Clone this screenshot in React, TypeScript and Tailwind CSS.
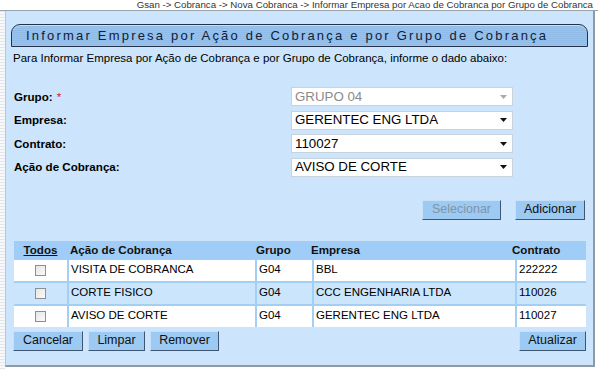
import React from "react";

const rows = [
  { acao: "VISITA DE COBRANCA", grupo: "G04", empresa: "BBL", contrato: "222222" },
  { acao: "CORTE FISICO", grupo: "G04", empresa: "CCC ENGENHARIA LTDA", contrato: "110026" },
  { acao: "AVISO DE CORTE", grupo: "G04", empresa: "GERENTEC ENG LTDA", contrato: "110027" },
];

function Select({ value, disabled }: { value: string; disabled?: boolean }) {
  return (
    <div
      className={`flex h-[19px] w-[222px] items-center justify-between border border-[#c9d3dc] bg-white pl-[3px] pr-[5px] text-[13.3px] font-normal leading-none ${
        disabled ? "text-[#8a8a8a]" : "text-black"
      }`}
    >
      <span>{value}</span>
      <svg width="7" height="4" viewBox="0 0 7 4">
        <path d="M0 0h7L3.5 4z" fill={disabled ? "#aaa" : "#111"} />
      </svg>
    </div>
  );
}

function Btn({ label, disabled, w }: { label: string; disabled?: boolean; w: string }) {
  return (
    <div
      className={`flex h-[20px] ${w} items-center justify-center border border-t-[#c6e0f7] border-l-[#c6e0f7] border-r-[#3d5673] border-b-[#3d5673] bg-[#9ccaf2] text-[12.5px] ${
        disabled ? "text-[#7f95a8]" : "text-[#111]"
      }`}
    >
      {label}
    </div>
  );
}

export default function App() {
  return (
    <div className="flex h-[370px] w-[598px] flex-col bg-white font-['Liberation_Sans',Arial,sans-serif]">
      {/* breadcrumb */}
      <div className="flex h-[11px] shrink-0 items-center justify-end border-b border-[#9aa4ad] bg-white pr-[5px] text-[9.7px] leading-none text-[#333]">
        Gsan -&gt; Cobranca -&gt; Nova Cobranca -&gt; Informar Empresa por Acao de Cobranca por Grupo de Cobranca
      </div>
      <div className="flex flex-1">
        <div className="w-[5px] bg-[repeating-linear-gradient(180deg,#e4e8ec_0px,#e4e8ec_1px,#f7f8f9_1px,#f7f8f9_3px)]" />
        <div className="mb-[3px] mr-[3px] flex flex-1 flex-col border-b-2 border-r-2 border-b-[#8f9aa6] border-r-[#8f9aa6] border-l border-l-[#b9c6d2] bg-[#cce5fc] px-[5px] pt-[13px]">
          {/* title */}
          <div className="flex h-[23px] items-center rounded-tl-[9px] rounded-tr-[9px] border border-[#23324a] bg-[repeating-linear-gradient(180deg,#98c3ec_0px,#98c3ec_1px,#8fbbe6_1px,#8fbbe6_2px)] pl-[14px] text-[13px] leading-none tracking-[2.2px] text-[#10203a] shadow-[inset_0_1px_0_#c8e0f6]">
            Informar Empresa por Ação de Cobrança e por Grupo de Cobrança
          </div>
          <div className="mt-[4px] pl-[2px] text-[11.5px] leading-[14px] text-black">
            Para Informar Empresa por Ação de Cobrança e por Grupo de Cobrança, informe o dado abaixo:
          </div>

          <div className="mt-[22px] flex flex-col gap-[4.5px] pl-[3px] text-[11.6px] font-bold text-black">
            {[
              ["Grupo:", "GRUPO 04", true],
              ["Empresa:", "GERENTEC ENG LTDA", false],
              ["Contrato:", "110027", false],
              ["Ação de Cobrança:", "AVISO DE CORTE", false],
            ].map(([label, value, dis], i) => (
              <div key={i} className="flex h-[19px] items-center">
                <div className="w-[277px]">
                  {label as string}
                  {i === 0 && <span className="ml-[4px] font-normal text-[#d02020]">*</span>}
                </div>
                <Select value={value as string} disabled={dis as boolean} />
              </div>
            ))}
          </div>

          <div className="mt-[23px] flex justify-end gap-[14px] pr-[3px]">
            <Btn label="Selecionar" disabled w="w-[79px]" />
            <Btn label="Adicionar" w="w-[70px]" />
          </div>

          {/* table */}
          <div className="mt-[21px] pl-[3px] pr-[2px]">
            <div className="grid grid-cols-[53px_186px_55px_201px_1fr] bg-[#9fcdf7] text-[11.6px] font-bold text-[#111]">
              <div className="flex h-[18px] items-center justify-center underline">Todos</div>
              <div className="flex h-[18px] items-center pl-[3px]">Ação de Cobrança</div>
              <div className="flex h-[18px] items-center pl-[3px]">Grupo</div>
              <div className="flex h-[18px] items-center pl-[3px]">Empresa</div>
              <div className="flex h-[18px] items-center pl-[3px]">Contrato</div>
            </div>
            <div className="flex flex-col gap-[2px] bg-[#a3cff5] pt-[1px]">
              {rows.map((r, i) => {
                const bg = i % 2 === 0 ? "bg-white" : "bg-[#cbe5fc]";
                return (
                  <div key={i} className="grid grid-cols-[53px_186px_55px_201px_1fr] gap-[2px] text-[11.5px] text-black">
                    <div className={`flex h-[21px] items-center justify-center ${bg}`}>
                      <div className="h-[11px] w-[11px] border border-[#8e8f8f] bg-[linear-gradient(135deg,#e6e6e6,#fafafa)]" />
                    </div>
                    <div className={`flex h-[21px] items-center pl-[2px] ${bg}`}>{r.acao}</div>
                    <div className={`flex h-[21px] items-center pl-[2px] ${bg}`}>{r.grupo}</div>
                    <div className={`flex h-[21px] items-center pl-[2px] ${bg}`}>{r.empresa}</div>
                    <div className={`flex h-[21px] items-center pl-[2px] ${bg}`}>{r.contrato}</div>
                  </div>
                );
              })}
            </div>
          </div>

          <div className="mt-[4px] flex items-center pl-[2px] pr-[2px]">
            <div className="flex gap-[5px]">
              <Btn label="Cancelar" w="w-[70px]" />
              <Btn label="Limpar" w="w-[57px]" />
              <Btn label="Remover" w="w-[69px]" />
            </div>
            <div className="ml-auto">
              <Btn label="Atualizar" w="w-[67px]" />
            </div>
          </div>
        </div>
      </div>
    </div>
  );
}
